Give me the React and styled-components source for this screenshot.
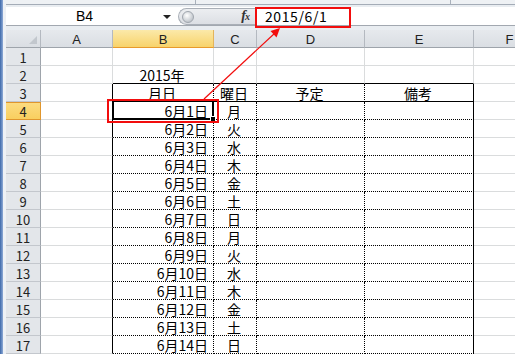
import React from "react";
import styled, { createGlobalStyle, css } from "styled-components";

const GlobalStyle = createGlobalStyle`
  html, body {
    margin: 0;
    padding: 0;
    background: #fff;
  }
  body {
    font-family: "Noto Sans CJK JP", "Noto Sans", sans-serif;
  }
`;

const JP = `"Noto Sans CJK JP", "Noto Sans", sans-serif`;
const GRID = "#dadcdd";

/* 画面全体 */
const Window = styled.div`
  position: relative;
  display: flex;
  width: 515px;
  height: 354px;
  overflow: hidden;
  background: #e9edf1;
`;

const FrameEdge = styled.div`
  flex: 0 0 3px;
  background: linear-gradient(to right, #3d69aa, #8eaad6);
  border-right: 3px solid #eef1f5;
`;

const Main = styled.div`
  display: flex;
  flex-direction: column;
  flex: 1;
  min-width: 0;
`;

/* リボンの下端 */
const RibbonEdge = styled.div`
  display: flex;
  height: 4px;
  border-bottom: 1px solid #a4acb7;
  margin-bottom: 2px;
  background: #eef1f4;
`;

const RibbonGroup = styled.div`
  width: ${(p) => p.$w}px;
  border-right: 1px solid #a9b1bb;
`;

/* 数式バー */
const FormulaBar = styled.div`
  display: flex;
  height: 18px;
  border-bottom: 1px solid #a2a8b0;
  margin-bottom: 4px;
  background: #fff;
`;

const NameBox = styled.div`
  display: flex;
  align-items: center;
  width: 172px;
  padding-left: 4px;
  box-sizing: border-box;
  font-family: "Liberation Sans", Arial, sans-serif;
  font-size: 14px;
  line-height: 16px;
  color: #000;
`;

const NameText = styled.div`
  flex: 1;
  text-align: center;
`;

const DropArrow = styled.div`
  width: 0;
  height: 0;
  margin: 2px 7px 0 4px;
  border-left: 4px solid transparent;
  border-right: 4px solid transparent;
  border-top: 4px solid #222;
`;

const Splitter = styled.div`
  display: flex;
  align-items: center;
  justify-content: space-between;
  box-sizing: border-box;
  width: 77px;
  height: 17px;
  margin-top: 1px;
  padding: 0 6px 0 3px;
  background: linear-gradient(#eceef1, #dcdfe4);
  border: 1px solid #a9afb7;
  border-right: none;
  border-radius: 9px 0 0 9px;
`;

const Knob = styled.div`
  width: 10px;
  height: 10px;
  border-radius: 50%;
  background: radial-gradient(circle at 40% 35%, #ffffff, #c4c9cf 70%);
  border: 1px solid #9fa5ad;
`;

const Fx = styled.div`
  font-family: "Liberation Serif", "Times New Roman", serif;
  font-style: italic;
  font-weight: bold;
  font-size: 14px;
  line-height: 14px;
  color: #333;
  letter-spacing: -1px;

  small {
    font-size: 10px;
  }
`;

const FormulaInput = styled.div`
  flex: 1;
  display: flex;
  align-items: center;
  padding-left: 10px;
  font-family: ${JP};
  font-size: 14px;
  line-height: 16px;
  letter-spacing: 0.6px;
  color: #000;
`;

/* シート */
const Sheet = styled.div`
  display: grid;
  grid-template-columns: 35px 72px 101px 43px 108px 109px 72px;
  grid-auto-rows: 18px;
  overflow: hidden;
  background: #fff;
`;

const HeadCell = styled.div`
  position: relative;
  box-sizing: border-box;
  display: flex;
  align-items: center;
  justify-content: center;
  padding-top: 1px;
  font-family: "Liberation Sans", Arial, sans-serif;
  font-size: 13px;
  line-height: 15px;
  color: #222;
  background: linear-gradient(#e6e9ed, #dadee3);
  border-right: 1px solid #b4b9c0;
  border-bottom: 1px solid #9ea4ab;

  ${(p) =>
    p.$active &&
    css`
      background: linear-gradient(#fbe9a9, #f8d36b);
      border-right-color: #e3b45c;
      border-bottom: 1px solid #e89a2c;
    `}
`;

const Corner = styled(HeadCell)`
  &::after {
    content: "";
    position: absolute;
    right: 3px;
    bottom: 3px;
    width: 0;
    height: 0;
    border-left: 8px solid transparent;
    border-bottom: 8px solid #c2c7cd;
  }
`;

const RowHead = styled.div`
  box-sizing: border-box;
  display: flex;
  align-items: center;
  justify-content: center;
  padding-top: 1px;
  font-family: ${JP};
  font-size: 13px;
  line-height: 15px;
  color: #222;
  background: #e3e6ea;
  border-right: 1px solid #9ea4ab;
  border-bottom: 1px solid #c3c7cd;

  ${(p) =>
    p.$active &&
    css`
      background: linear-gradient(#fcdc82, #f9cf5f);
      border-right-color: #e0962d;
      border-bottom-color: #e0962d;
      box-shadow: inset 0 1px 0 #e0962d;
    `}
`;

const line = (k) =>
  k === "solid" ? "1px solid #000" : k === "dotted" ? "1px dotted #000" : `1px solid ${GRID}`;

const Cell = styled.div`
  position: relative;
  box-sizing: border-box;
  display: flex;
  align-items: center;
  justify-content: ${(p) => (p.$align === "right" ? "flex-end" : p.$align === "center" ? "center" : "flex-start")};
  padding: 1px 5px 0 3px;
  font-family: ${JP};
  font-size: 14px;
  line-height: 16px;
  color: #000;
  white-space: nowrap;
  border-right: ${(p) => line(p.$right)};
  border-bottom: ${(p) => line(p.$bottom)};
`;

/* 選択セル */
const Selection = styled.div`
  position: absolute;
  left: -1px;
  top: -2px;
  right: -1px;
  bottom: -1px;
  border: 2px solid #000;
  pointer-events: none;

  &::after {
    content: "";
    position: absolute;
    right: -4px;
    bottom: -4px;
    width: 4px;
    height: 4px;
    background: #000;
    border: 1px solid #fff;
  }
`;

/* 注釈 */
const RedBox = styled.div`
  position: absolute;
  left: ${(p) => p.$x}px;
  top: ${(p) => p.$y}px;
  width: ${(p) => p.$w}px;
  height: ${(p) => p.$h}px;
  box-sizing: border-box;
  border: 2px solid #f20d0d;
  pointer-events: none;
`;

const ArrowLayer = styled.svg`
  position: absolute;
  left: 0;
  top: 0;
  pointer-events: none;
`;

const COLS = ["A", "B", "C", "D", "E", "F"];
const WEEK = ["月", "火", "水", "木", "金", "土", "日"];

function cellInfo(r, c) {
  // c: 0=A .. 5=F
  const inTable = c >= 1 && c <= 4;
  let right = "grid",
    bottom = "grid",
    text = "",
    align = "left";
  if (c === 0 && r >= 3) right = "solid";
  if (inTable) {
    if (r === 2) bottom = "solid";
    if (r === 3) {
      bottom = "solid";
      right = c === 4 ? "solid" : "dotted";
      text = ["月日", "曜日", "予定", "備考"][c - 1];
      align = "center";
    }
    if (r >= 4) {
      bottom = "dotted";
      right = c === 4 ? "solid" : "dotted";
      if (c === 1) {
        text = `6月${r - 3}日`;
        align = "right";
      }
      if (c === 2) {
        text = WEEK[(r - 4) % 7];
        align = "center";
      }
    }
    if (r === 2 && c === 1) {
      text = "2015年";
      align = "center";
    }
  }
  return { right, bottom, text, align };
}

export default function App() {
  const rows = [];
  for (let r = 1; r <= 17; r++) rows.push(r);

  return (
    <>
      <GlobalStyle />
      <Window>
        <FrameEdge />
        <Main>
          <RibbonEdge>
            <RibbonGroup $w={189} />
            <RibbonGroup $w={254} />
          </RibbonEdge>
          <FormulaBar>
            <NameBox>
              <NameText>B4</NameText>
              <DropArrow />
            </NameBox>
            <Splitter>
              <Knob />
              <Fx>
                f<small>x</small>
              </Fx>
            </Splitter>
            <FormulaInput>2015/6/1</FormulaInput>
          </FormulaBar>
          <Sheet>
            <Corner />
            {COLS.map((c) => (
              <HeadCell key={c} $active={c === "B"}>
                {c}
              </HeadCell>
            ))}
            {rows.map((r) => (
              <React.Fragment key={r}>
                <RowHead $active={r === 4}>{r}</RowHead>
                {COLS.map((col, c) => {
                  const info = cellInfo(r, c);
                  return (
                    <Cell key={col} $right={info.right} $bottom={info.bottom} $align={info.align}>
                      {info.text}
                      {r === 4 && c === 1 && <Selection />}
                    </Cell>
                  );
                })}
              </React.Fragment>
            ))}
          </Sheet>
        </Main>
        <RedBox $x={255} $y={7} $w={96} $h={21} />
        <RedBox $x={107} $y={99} $w={112} $h={24} />
        <ArrowLayer width="515" height="354" viewBox="0 0 515 354">
          <line x1="204" y1="99" x2="275" y2="33" stroke="#f20d0d" strokeWidth="1.2" />
          <polygon points="280,28 276.5,37.5 270.5,31" fill="#f20d0d" />
        </ArrowLayer>
      </Window>
    </>
  );
}
